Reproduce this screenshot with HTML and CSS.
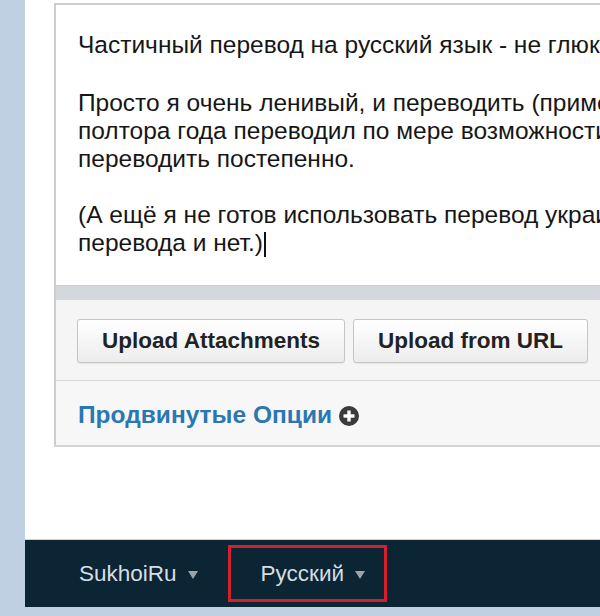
FILE: index.html
```html
<!DOCTYPE html>
<html lang="ru">
<head>
<meta charset="utf-8">
<title>Editor</title>
<link rel="stylesheet" href="styles.css">
</head>
<body>
<div class="page">
  <div class="content">
    <div class="editor">
      <div class="text-area">
        <p class="para first">Частичный перевод на русский язык - не глюк форума.</p>
        <p class="para">Просто я очень ленивый, и переводить (примерно 3000 фраз) сразу не стал.<br>полтора года переводил по мере возможности, поэтому и дальше буду<br>переводить постепенно.</p>
        <p class="para">(А ещё я не готов использовать перевод украинских коллег, а другого<br>перевода и нет.)<span class="caret"></span></p>
      </div>
      <div class="grip"></div>
      <div class="uploads">
        <button class="btn" type="button">Upload Attachments</button>
        <button class="btn" type="button">Upload from URL</button>
      </div>
      <div class="options">
        <a class="options-link" href="#">Продвинутые Опции</a>
        <svg class="plus" width="20" height="20" viewBox="0 0 20 20" aria-hidden="true">
          <circle cx="10" cy="10" r="10" fill="#3b3b3b"/>
          <rect x="4.5" y="8.3" width="11" height="3.4" fill="#fff"/>
          <rect x="8.3" y="4.5" width="3.4" height="11" fill="#fff"/>
        </svg>
      </div>
    </div>
  </div>
  <div class="footer">
    <div class="foot-item">SukhoiRu <span class="tri"></span></div>
    <div class="foot-item selected">Русский <span class="tri"></span></div>
  </div>
</div>
</body>
</html>
```

FILE: styles.css
```css
html, body {
  margin: 0;
  padding: 0;
  overflow: hidden;
}
body {
  background: #bfd0e2;
  font-family: "Liberation Sans", Arial, sans-serif;
  width: 600px;
  height: 616px;
}
.page {
  margin-left: 25px;
  width: 575px;
  overflow: hidden;
}
.content {
  background: #ffffff;
  height: 536px;
  padding-top: 3px;
  padding-left: 29px;
}
.editor {
  width: 760px;
  border-top: 2px solid #cdcdcd;
  border-left: 2px solid #cdcdcd;
  border-bottom: 2px solid #d4d4d4;
}
.text-area {
  height: 254px;
  padding: 26px 0 0 22px;
  background: #ffffff;
  color: #161616;
  font-size: 24.5px;
  line-height: 28px;
  white-space: nowrap;
}
.para {
  margin: 0 0 28px 0;
}
.para.first {
  margin-bottom: 30px;
}
.caret {
  display: inline-block;
  width: 0;
  height: 25px;
  border-left: 2px solid #111;
  vertical-align: -6px;
  margin-left: 1px;
}
.grip {
  height: 15px;
  background: #d4d8dc;
  border-top: 1px solid #c9cdd1;
  box-sizing: border-box;
}
.uploads {
  display: flex;
  gap: 8px;
  padding: 19px 0 17px 21px;
  background: #f5f5f5;
  border-bottom: 1px solid #d6d6d6;
}
.btn {
  height: 44px;
  padding: 0 24px;
  font-family: "Liberation Sans", Arial, sans-serif;
  font-size: 22.5px;
  font-weight: bold;
  color: #222;
  background: linear-gradient(#ffffff, #ececec);
  border: 1px solid #c6c6c6;
  border-radius: 3px;
  box-shadow: 0 1px 1px rgba(0,0,0,0.06);
}
.options {
  display: flex;
  align-items: center;
  gap: 7px;
  height: 60px;
  padding: 4px 0 0 22px;
  background: #f7f7f7;
}
.options-link {
  color: #2a77b4;
  font-size: 24.5px;
  font-weight: bold;
  text-decoration: none;
}
.plus {
  display: block;
  margin-top: 1px;
}
.footer {
  display: flex;
  align-items: center;
  height: 68px;
  padding-left: 54px;
  background: #0b2534;
  border-top: 1px solid #c5d2dc;
  box-sizing: border-box;
  color: #d6dee3;
  font-size: 22.5px;
}
.foot-item {
  display: flex;
  align-items: center;
  gap: 11px;
  height: 50px;
  box-sizing: border-box;
}
.foot-item.selected {
  margin-left: 30px;
  padding: 0 19px 0 30px;
  height: 57px;
  border: 3px solid #d5202b;
}
.tri {
  display: inline-block;
  width: 0;
  height: 0;
  border-left: 5.5px solid transparent;
  border-right: 5.5px solid transparent;
  border-top: 8px solid #9aa3a9;
  margin-top: 2px;
}
```
